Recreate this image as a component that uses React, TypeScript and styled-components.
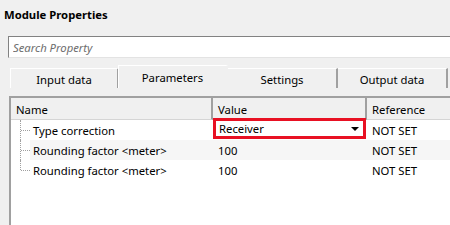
import React from "react";
import styled, { createGlobalStyle } from "styled-components";

const GlobalStyle = createGlobalStyle`
* {
    box-sizing: border-box;
    margin: 0;
    padding: 0;
}
body {
    background-color: #f0f0f0;
    font-family: "Noto Sans", "Open Sans", sans-serif;
    font-size: 11.3px;
    color: #000;
    overflow: hidden;
}
`

const Panel = styled.div`
    width: 450px;
    height: 225px;
    display: flex;
    flex-direction: column;
    overflow: hidden;
`

const Title = styled.h1`
    font-size: 11.3px;
    font-weight: bold;
    height: 30px;
    line-height: 29px;
    padding-left: 4px;
`

const Search = styled.input`
    margin-left: 8px;
    margin-top: 6px;
    width: 460px;
    height: 22px;
    border: none;
    border-top: 1px solid #828282;
    border-left: 1px solid #828282;
    border-bottom: 1px solid #e3e3e3;
    background: #fff;
    padding-left: 4px;
    font-family: inherit;
    font-size: 11.3px;
    font-style: italic;
    outline: none;
    &::placeholder {
        color: #6d6d6d;
    }
`

const Tabs = styled.div`
    display: flex;
    align-items: flex-end;
    margin-left: 10px;
    margin-top: 7px;
    height: 23px;
`

type TTab = {
    w: number
    active?: boolean
    first?: boolean
}

const Tab = styled.div<TTab>`
    width: ${p => p.w}px;
    height: ${p => p.active ? 23 : 20}px;
    display: flex;
    align-items: center;
    justify-content: center;
    padding-top: ${p => p.active ? 0 : 1}px;
    background: #f0f0f0;
    border-top: 1px solid #fff;
    border-left: ${p => p.first || p.active ? "1px solid #fff" : "none"};
    margin-left: ${p => p.active ? -1 : 0}px;
    border-right: 2px solid ${p => p.active ? "#f0f0f0" : "#a0a0a0"};
`

const Grid = styled.div`
    margin-left: 9px;
    margin-top: 8px;
    flex: 1;
    background: #fff;
    border-top: 2px solid #a0a0a0;
    border-left: 2px solid #a0a0a0;
    display: grid;
    grid-template-columns: 202px 154px 1fr;
    grid-template-rows: 22px;
    grid-auto-rows: 20px;
    align-content: start;
`

const Head = styled.div<{ last?: boolean }>`
    background: #f0f0f0;
    border-bottom: 1px solid #d5d5d5;
    border-right: ${p => p.last ? "none" : "2px solid #a0a0a0"};
    padding-left: 5px;
    padding-top: 1px;
    display: flex;
    align-items: center;
`

const NameCell = styled.div<{ shade?: boolean; last?: boolean }>`
    position: relative;
    padding-left: 22px;
    display: flex;
    align-items: center;
    background: linear-gradient(to right, #fff 19px, ${p => p.shade ? "#f6f6f6" : "#fff"} 19px);
    &::before {
        content: "";
        position: absolute;
        left: 9px;
        top: 0;
        height: ${p => p.last ? "10px" : "20px"};
        border-left: 1px dotted #a0a0a0;
    }
    &::after {
        content: "";
        position: absolute;
        left: 10px;
        top: 10px;
        width: 9px;
        border-top: 1px dotted #a0a0a0;
    }
`

const Cell = styled.div<{ shade?: boolean }>`
    display: flex;
    align-items: center;
    padding-left: 5px;
    background: ${p => p.shade ? "#f6f6f6" : "#fff"};
`

const Editor = styled.div`
    margin-top: -2px;
    height: 21px;
    margin-left: 0;
    margin-right: 1px;
    border: 3px solid #e81123;
    background: #fff;
    display: flex;
    align-items: center;
    justify-content: space-between;
    padding: 0 4px 0 3px;
`

const Arrow = styled.span`
    width: 0;
    height: 0;
    border-left: 4px solid transparent;
    border-right: 4px solid transparent;
    border-top: 4px solid #000;
`

const rows = [
    { name: "Type correction", value: "Receiver", ref: "NOT SET", edit: true },
    { name: "Rounding factor <meter>", value: "100", ref: "NOT SET" },
    { name: "Rounding factor <meter>", value: "100", ref: "NOT SET" },
]

export default function App() {
    return (
        <Panel>
            <GlobalStyle />
            <Title>Module Properties</Title>
            <Search placeholder="Search Property" />
            <Tabs>
                <Tab w={109} first>Input data</Tab>
                <Tab w={110} active>Parameters</Tab>
                <Tab w={110}>Settings</Tab>
                <Tab w={110}>Output data</Tab>
            </Tabs>
            <Grid>
                <Head>Name</Head>
                <Head>Value</Head>
                <Head last>Reference</Head>
                {rows.map((r, i) => (
                    <React.Fragment key={i}>
                        <NameCell shade={i === 1} last={i === rows.length - 1}>{r.name}</NameCell>
                        {r.edit ? (
                            <Editor>{r.value}<Arrow /></Editor>
                        ) : (
                            <Cell shade={i === 1}>{r.value}</Cell>
                        )}
                        <Cell shade={i === 1}>{r.ref}</Cell>
                    </React.Fragment>
                ))}
            </Grid>
        </Panel>
    )
}
